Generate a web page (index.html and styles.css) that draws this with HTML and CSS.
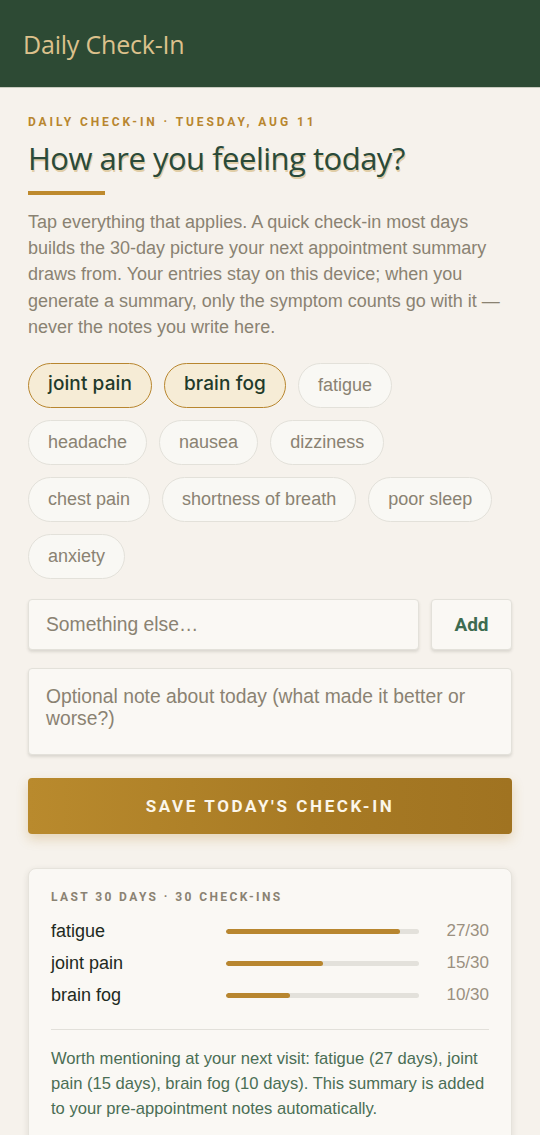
FILE: index.html
```html
<!DOCTYPE html>
<html lang="en">
<head>
<meta charset="utf-8">
<title>Daily Check-In</title>
<link rel="stylesheet" href="styles.css">
</head>
<body>
<header class="topbar">
  <h1 class="brand">Daily Check-In</h1>
</header>
<main class="page">
  <p class="eyebrow">Daily check-in · Tuesday, Aug 11</p>
  <h2 class="title">How are you feeling today?</h2>
  <div class="rule"></div>
  <p class="intro">Tap everything that applies. A quick check-in most days builds the 30-day picture your next appointment summary draws from. Your entries stay on this device; when you generate a summary, only the symptom counts go with it — never the notes you write here.</p>

  <div class="chips">
    <button class="chip selected">joint pain</button>
    <button class="chip selected">brain fog</button>
    <button class="chip">fatigue</button>
    <button class="chip">headache</button>
    <button class="chip">nausea</button>
    <button class="chip">dizziness</button>
    <button class="chip">chest pain</button>
    <button class="chip">shortness of breath</button>
    <button class="chip">poor sleep</button>
    <button class="chip">anxiety</button>
  </div>

  <div class="add-row">
    <input class="field" type="text" placeholder="Something else…">
    <button class="add-btn">Add</button>
  </div>

  <textarea class="note" placeholder="Optional note about today (what made it better or worse?)"></textarea>

  <button class="save">Save today's check-in</button>

  <section class="card">
    <p class="card-label">Last 30 days · 30 check-ins</p>
    <div class="stats">
      <div class="stat">
        <span class="stat-name">fatigue</span>
        <span class="bar"><span class="fill" style="width:90%"></span></span>
        <span class="count">27/30</span>
      </div>
      <div class="stat">
        <span class="stat-name">joint pain</span>
        <span class="bar"><span class="fill" style="width:50%"></span></span>
        <span class="count">15/30</span>
      </div>
      <div class="stat">
        <span class="stat-name">brain fog</span>
        <span class="bar"><span class="fill" style="width:33.3%"></span></span>
        <span class="count">10/30</span>
      </div>
    </div>
    <p class="summary">Worth mentioning at your next visit: fatigue (27 days), joint pain (15 days), brain fog (10 days). This summary is added to your pre-appointment notes automatically.</p>
  </section>
</main>
</body>
</html>
```

FILE: styles.css
```css
* { box-sizing: border-box; }
html, body { margin: 0; padding: 0; }
body {
  background: #f6f2ec;
  font-family: "Liberation Sans", Arial, sans-serif;
  color: #8a8272;
}

.topbar {
  background: #2d4a34;
  height: 88px;
  border-bottom: 1px solid #c9cbbf;
  display: flex;
  align-items: center;
  padding: 0 23px;
}
.brand {
  margin: 0;
  font-family: "Open Sans", sans-serif;
  font-weight: 400;
  font-size: 25px;
  letter-spacing: -0.2px;
  color: #dcc18c;
}

.page {
  padding: 27px 28px 40px;
}

.eyebrow {
  margin: 0;
  font-family: Roboto, "Liberation Sans", sans-serif;
  font-weight: 700;
  font-size: 12px;
  letter-spacing: 2.9px;
  line-height: 14px;
  text-transform: uppercase;
  color: #b8862f;
}

.title {
  margin: 9px 0 0;
  font-family: "Open Sans", sans-serif;
  font-weight: 400;
  font-size: 31px;
  letter-spacing: -0.5px;
  line-height: 40px;
  color: #2a4a3a;
  text-shadow: 1px 2px 0 rgba(200, 160, 80, 0.45);
}

.rule {
  width: 77px;
  height: 4px;
  background: #be8a2d;
  margin-top: 13px;
}

.intro {
  margin: 14px 0 0;
  font-size: 18px;
  line-height: 26.2px;
  color: #8a8272;
}

.chips {
  margin-top: 23px;
  max-width: 470px;
  display: flex;
  flex-wrap: wrap;
  gap: 12px;
}
.chip {
  height: 45px;
  padding: 0 19px;
  border-radius: 23px;
  border: 1px solid #e3e1da;
  background: #f9f8f4;
  font-family: "Liberation Sans", Arial, sans-serif;
  font-size: 18px;
  color: #8a8272;
}
.chip.selected {
  background: #f6ecd6;
  border-color: #b8862f;
  font-family: Inter, sans-serif;
  font-weight: 500;
  font-size: 19px;
  letter-spacing: 0.1px;
  color: #1f3a2a;
  padding-bottom: 4px;
}

.add-row {
  margin-top: 20px;
  display: flex;
  gap: 12px;
}
.field {
  flex: 1;
  min-width: 0;
  height: 51px;
  border: 1px solid #e3e1da;
  border-radius: 4px;
  background: #faf8f4;
  box-shadow: 0 2px 3px rgba(60, 60, 40, 0.14);
  padding: 0 17px;
  font-family: "Liberation Sans", Arial, sans-serif;
  font-size: 19.3px;
  color: #4a4a40;
}
.field::placeholder, .note::placeholder { color: #8a8272; }
.add-btn {
  width: 81px;
  height: 51px;
  border: 1px solid #e3e1da;
  border-radius: 4px;
  background: #faf8f4;
  box-shadow: 0 2px 3px rgba(60, 60, 40, 0.14);
  font-family: Roboto, "Liberation Sans", sans-serif;
  font-weight: 700;
  font-size: 19px;
  color: #3d6b50;
}

.note {
  display: block;
  width: 100%;
  margin-top: 18px;
  height: 87px;
  border: 1px solid #e3e1da;
  border-radius: 4px;
  background: #faf8f4;
  box-shadow: 0 2px 3px rgba(60, 60, 40, 0.14);
  padding: 17px 17px;
  font-family: "Liberation Sans", Arial, sans-serif;
  font-size: 19.3px;
  line-height: 22px;
  resize: none;
}

.save {
  display: block;
  width: 100%;
  margin-top: 23px;
  height: 56px;
  border: none;
  border-radius: 4px;
  background: linear-gradient(90deg, #b98a2d 0%, #a77a24 60%, #a07321 100%);
  box-shadow: 0 5px 12px rgba(184, 134, 47, 0.28);
  font-family: Roboto, "Liberation Sans", sans-serif;
  font-weight: 700;
  font-size: 17px;
  letter-spacing: 2.6px;
  text-transform: uppercase;
  color: #fbf6ea;
}

.card {
  margin-top: 34px;
  background: #faf8f4;
  border: 1px solid #e6e3dc;
  border-radius: 8px;
  box-shadow: 0 2px 6px rgba(60, 60, 40, 0.12);
  padding: 21px 22px 24px;
}
.card-label {
  margin: 0;
  font-family: Roboto, "Liberation Sans", sans-serif;
  font-weight: 700;
  font-size: 12px;
  letter-spacing: 2.4px;
  line-height: 14px;
  text-transform: uppercase;
  color: #8a8272;
}
.stats {
  margin-top: 11px;
  padding-bottom: 18px;
  border-bottom: 1px solid #e2e0da;
}
.stat {
  display: grid;
  grid-template-columns: 1fr 193px 70px;
  align-items: center;
  height: 32px;
}
.stat-name {
  font-size: 18px;
  color: #1e2a22;
}
.bar {
  display: block;
  height: 5px;
  background: #e3e1db;
  border-radius: 3px;
  overflow: hidden;
}
.fill {
  display: block;
  height: 100%;
  background: #b8862f;
  border-radius: 3px;
}
.count {
  text-align: right;
  font-size: 17px;
  color: #9a9080;
}
.summary {
  margin: 16px 0 0;
  font-size: 16.6px;
  line-height: 25px;
  color: #4a6e55;
}
```
